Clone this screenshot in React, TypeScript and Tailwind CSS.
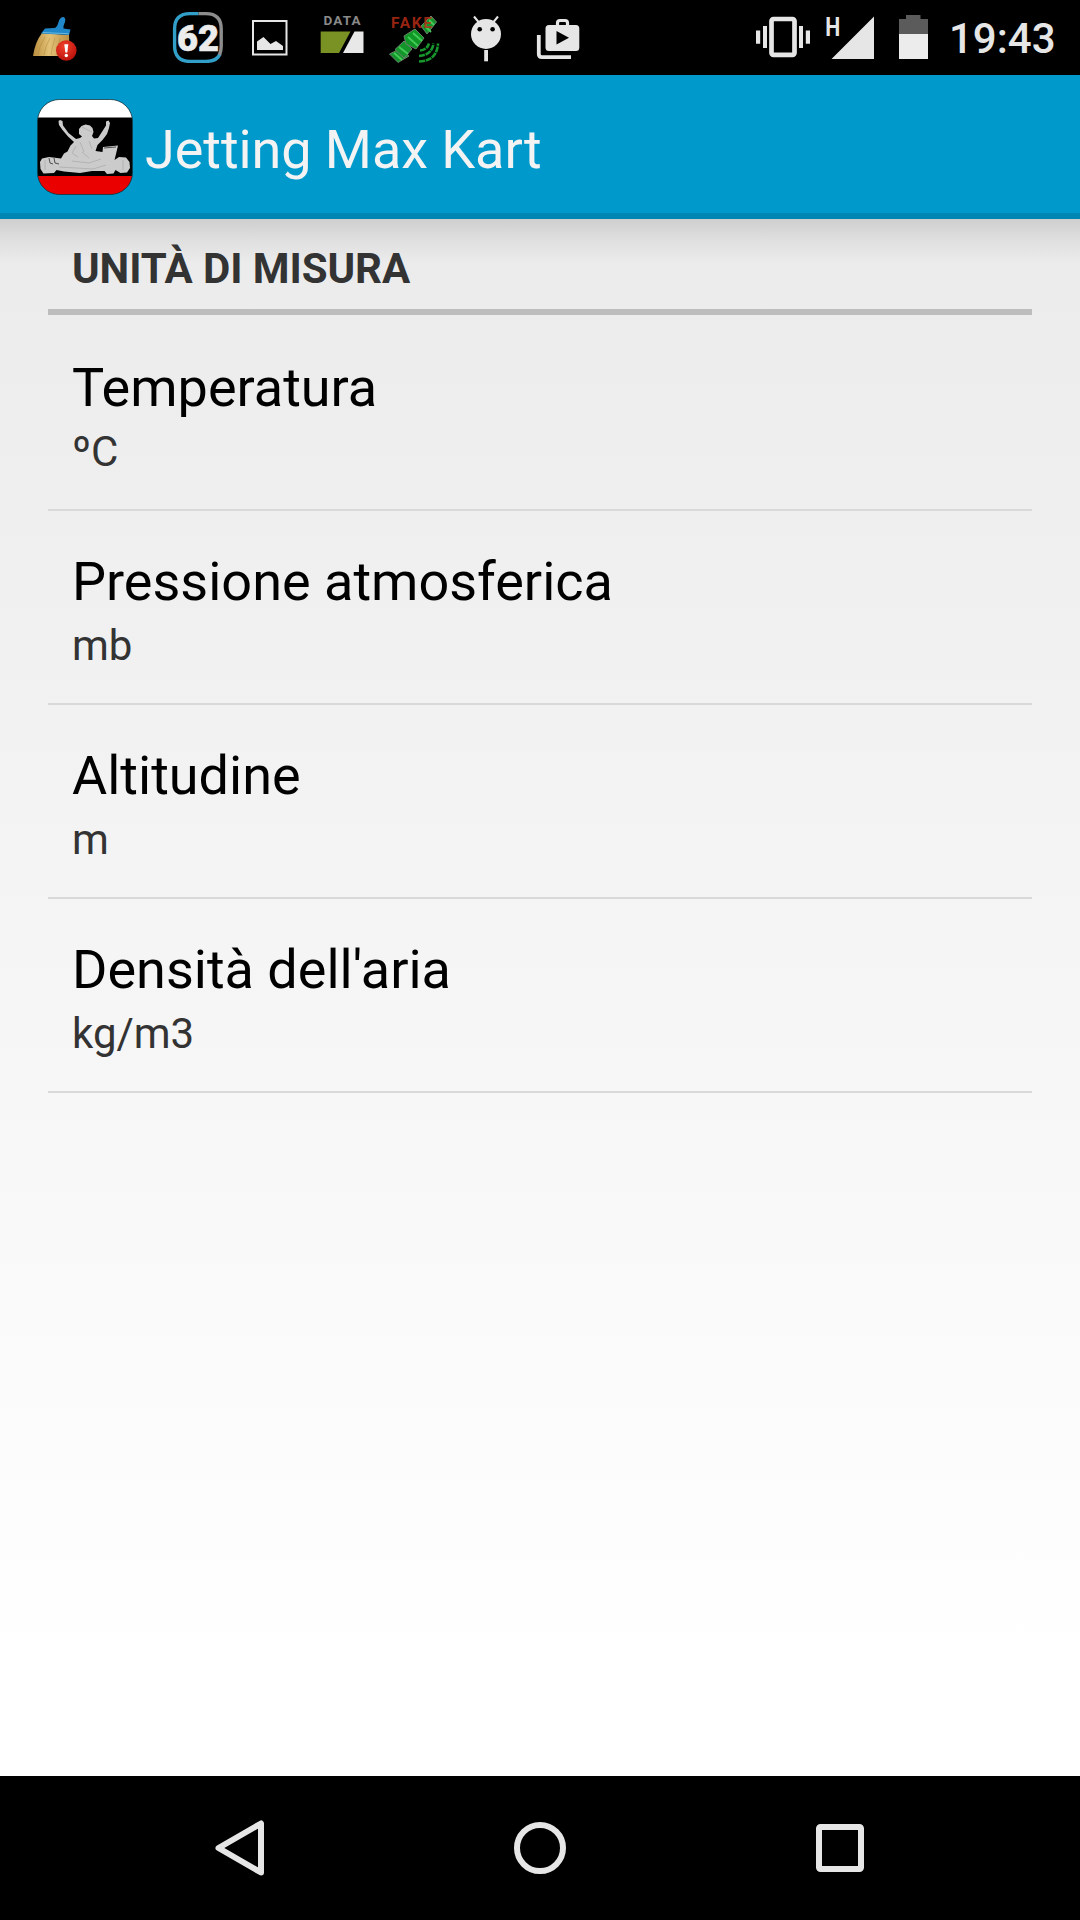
import React from "react";

const units = [
  { title: "Temperatura", value: "ºC" },
  { title: "Pressione atmosferica", value: "mb" },
  { title: "Altitudine", value: "m" },
  { title: "Densità dell'aria", value: "kg/m3" },
];

function Broom() {
  return (
    <svg className="ml-[32px] h-[48px] w-[46px] shrink-0" viewBox="32 15 46 48">
      <defs>
        <linearGradient id="straw" x1="0" x2="1" y1="0" y2="0">
          <stop offset="0" stopColor="#b98d3e" />
          <stop offset="0.45" stopColor="#e3c277" />
          <stop offset="1" stopColor="#b98f45" />
        </linearGradient>
        <radialGradient id="alert" cx="0.4" cy="0.3" r="0.75">
          <stop offset="0" stopColor="#f0402c" />
          <stop offset="1" stopColor="#b80f0a" />
        </radialGradient>
      </defs>
      <path d="M42 33 L69 35 Q70 47 66 56 L33 56 Q35 42 42 33Z" fill="url(#straw)" />
      <path d="M45 37 Q39 46 38 55 M50 38 Q45 47 44 55 M55 38 Q52 47 51 55 M60 38 L57 55" stroke="#a87c32" strokeWidth="0.6" strokeOpacity="0.7" fill="none" />
      <path d="M45 28.500 L54 28 Q57 28 58.500 22 Q60 17 63.500 17 Q66 18 65 22 Q63 26 63.500 28.500 L70.500 29.500 L69 35 L41 33.500Z" fill="#2088c8" />
      <path d="M43 32.500 L69 33.800" stroke="#67b9e2" strokeWidth="1" />
      <circle cx="66.300" cy="50.500" r="10.300" fill="url(#alert)" />
      <path d="M64.300 44.300 h4 l-1 8.300 h-2z" fill="#fff" />
      <circle cx="66.300" cy="55.500" r="1.700" fill="#fff" />
    </svg>
  );
}

function Battery62() {
  return (
    <svg className="ml-[94px] h-[52px] w-[52px] shrink-0" viewBox="172 11 52 52">
      <path d="M198.500 13.600 H190 Q174.600 13.600 174.600 29 V46 Q174.600 61.400 190 61.400 H206 Q217 61.400 220 54" fill="none" stroke="#319fc8" strokeWidth="3.400" />
      <path d="M198.500 13.600 H206 Q221.200 13.600 221.200 29 V46 Q221.200 51 219.500 55" fill="none" stroke="#8d8d8d" strokeWidth="3.400" />
      <text x="198" y="51" textAnchor="middle" fontFamily="Roboto, sans-serif" fontWeight="900" fontSize="37" textLength="42" lengthAdjust="spacingAndGlyphs" fill="#ececec" stroke="#ececec" strokeWidth="0.6">62</text>
    </svg>
  );
}

function Picture() {
  return (
    <svg className="ml-[28px] h-[36px] w-[36px] shrink-0" viewBox="0 0 36 36">
      <rect x="1" y="1" width="33.500" height="33.500" fill="none" stroke="#e6e6e6" strokeWidth="2" />
      <path d="M5 30 V21.500 L11.500 17 L18.500 24 L24 21 L31 26 V30Z" fill="#e6e6e6" />
    </svg>
  );
}

function DataMeter() {
  return (
    <svg className="ml-[32px] h-[46px] w-[46px] shrink-0" viewBox="320 8 46 46">
      <text x="323.500" y="25.200" fontFamily="Roboto, sans-serif" fontWeight="700" fontSize="13.500" textLength="37" fill="#8a8a8a">DATA</text>
      <path d="M320.700 31.500 H350.500 L339 53 H320.700Z" fill="#7a9223" />
      <path d="M354.500 31.500 H363.500 V53 H343Z" fill="#e8e8e8" />
    </svg>
  );
}

function Satellite() {
  return (
    <svg className="ml-[22px] h-[56px] w-[52px] shrink-0" viewBox="388 8 52 56">
      <g stroke="#6a806a" strokeWidth="1">
        <path d="M389.500 54 L400 49 L409 56 L398 62.500Z M421 26 L431 16 L436.500 22 L427 34Z" fill="#14952c" />
        <path d="M395 49.500 L404 41 L412 49 L404 58Z" fill="#14952c" />
        <path d="M404 36 L415 29 L424 38 L416 49 L406 44Z" fill="#109827" />
      </g>
      <path d="M394 53 L402 60 M399 47 L408 54 M408 37 L418 46 M413 33 L422 41 M424 25 L431 32 M429 20 L434 25" stroke="#43cc55" strokeWidth="1.800" />
      <g fill="none" stroke="#18962d" strokeWidth="2.600" strokeDasharray="6 0.800">
        <path d="M420 50.500 Q427 50 429 43.500" />
        <path d="M419 56 Q432 55 433.500 43.500" />
        <path d="M419 61.500 Q437 61 438 43.500" />
      </g>
      <text x="391" y="28" fontFamily="Roboto, sans-serif" fontWeight="700" fontSize="15.500" textLength="41" fill="#b52b16" fillOpacity="0.85">FAKE</text>
    </svg>
  );
}

function Droid() {
  return (
    <svg className="ml-[30px] h-[48px] w-[32px] shrink-0" viewBox="470 14 32 48">
      <circle cx="486" cy="34" r="15" fill="#e6e6e6" />
      <path d="M478.500 22 L474 16.500 M493.500 22 L498 16.500" stroke="#e6e6e6" strokeWidth="2" />
      <circle cx="479.700" cy="29.300" r="2.300" fill="#000" />
      <circle cx="492.600" cy="29.300" r="2.300" fill="#000" />
      <rect x="484.200" y="50" width="3.800" height="11.300" fill="#e6e6e6" />
    </svg>
  );
}

function PlayCase() {
  return (
    <svg className="ml-[34px] h-[42px] w-[44px] shrink-0" viewBox="536 18 44 42">
      <path d="M538.800 35 V54 Q538.800 57.200 542 57.200 H571" fill="none" stroke="#e6e6e6" strokeWidth="3.800" />
      <path d="M557.500 26 V23 Q557.500 20.500 560 20.500 H565 Q567.500 20.500 567.500 23 V26" fill="none" stroke="#e6e6e6" strokeWidth="3.200" />
      <path fillRule="evenodd" d="M549 25 H576 Q579.300 25 579.300 28.500 V47.500 Q579.300 51 576 51 H549 Q545.500 51 545.500 47.500 V28.500 Q545.500 25 549 25Z M556.500 31 V44.500 L569 37.800Z" fill="#e6e6e6" />
    </svg>
  );
}

function Vibrate() {
  return (
    <svg className="h-[44px] w-[56px] shrink-0" viewBox="755 15 56 44">
      <rect x="771.500" y="19" width="23" height="35.800" rx="2" fill="none" stroke="#e6e6e6" strokeWidth="4.700" />
      <path d="M756 30.500h4.200v13.300h-4.200z M763 26h4v22h-4z M799 26h4v22h-4z M805.800 30.500h4.200v13.300h-4.200z" fill="#e6e6e6" />
    </svg>
  );
}

function Signal() {
  return (
    <svg className="ml-[14px] h-[52px] w-[50px] shrink-0" viewBox="825 8 50 52">
      <text x="825.200" y="35.500" fontFamily="Roboto, sans-serif" fontWeight="700" fontSize="25" textLength="15" lengthAdjust="spacingAndGlyphs" fill="#e6e6e6">H</text>
      <path d="M874 16.500 V59 H831.500Z" fill="#e6e6e6" />
    </svg>
  );
}

function Battery() {
  return (
    <svg className="ml-[23px] h-[46px] w-[32px] shrink-0" viewBox="898 14 32 46">
      <path d="M906 15h14.500v4h7.500v15h-29v-15h7z" fill="#5b5b5b" />
      <rect x="899" y="34" width="29" height="25" fill="#ececec" />
    </svg>
  );
}

function KartLogo() {
  return (
    <svg className="h-[98px] w-[98px] shrink-0" viewBox="36 98 98 98">
      <defs>
        <clipPath id="tile"><rect x="37.500" y="99.500" width="95" height="95" rx="22" /></clipPath>
      </defs>
      <g clipPath="url(#tile)">
        <rect x="37" y="99" width="96" height="96" fill="#000" />
        <rect x="37" y="99" width="96" height="18.500" fill="#fff" />
        <rect x="37" y="176" width="96" height="19" fill="#eb0000" />
      </g>
      <rect x="37.500" y="99.500" width="95" height="95" rx="22" fill="none" stroke="#103c4a" strokeOpacity="0.75" strokeWidth="1" />
      <path
        fill="#cbcbcb"
        d="M58.500 121 L60 120 L62.500 121 L63 125.500 L68.500 133 L76 139 L80 138 L82 136.500 L79 134 L79 129 L81.500 126 L85.500 124.500 L90 125.500 L92.500 128 L93.500 132 L92 136 L94 138.500 L98 138 L102.500 131 L106 125.500 L106 121.500 L108.500 120.500 L110 123 L109 128 L107 134 L102.500 140 L97.500 145 L95.500 151 L102.500 152 L103 147 L118 145.500 L116 154 L114.500 160 L119 157 L126 157.500 L129.500 162 L130 168 L127 172.500 L120.500 173 L115.500 170 L113.500 173.500 L107 174 L104.500 171 L92 171 L80 173 L64 171.500 L56.500 170 L54 173 L43.500 173.500 L40.500 169 L40 162 L42 158.500 L49 157 L61 158.500 L64 153.500 L67.500 151.500 L70.500 145.500 L74 142 L68 136.500 L62.500 130 L59 125Z"
      />
      <path d="M49 158l1 5 3 1M54 158l1 5 4 1 M104 148l12-1" stroke="#303030" strokeWidth="0.800" fill="none" />
      <path d="M82 127l8 4 2 1M80 142l4 10M89 141l3 8M76 146l-4 7 6 4M72 161l17 2 12-4M82 152l7 6M45 160v10M123 160v10M59 167l34 2 13-4" stroke="#b0b0b0" strokeWidth="0.900" fill="none" />
    </svg>
  );
}

export default function App() {
  return (
    <div className="flex h-[1920px] w-[1080px] flex-col overflow-hidden bg-white font-['Roboto',sans-serif]">
      <div className="flex h-[75px] shrink-0 justify-between bg-black">
        <div className="flex items-start">
          <div className="flex pt-[15px]"><Broom /></div>
          <div className="flex pt-[11px]"><Battery62 /></div>
          <div className="flex pt-[20px]"><Picture /></div>
          <div className="flex pt-[8px]"><DataMeter /></div>
          <div className="flex pt-[8px]"><Satellite /></div>
          <div className="flex pt-[14px]"><Droid /></div>
          <div className="flex pt-[18px]"><PlayCase /></div>
        </div>
        <div className="flex items-start pr-[24px]">
          <div className="flex pt-[15px]"><Vibrate /></div>
          <div className="flex pt-[8px]"><Signal /></div>
          <div className="flex pt-[14px]"><Battery /></div>
          <div className="ml-[19px] w-[107px] pt-[14px] text-[42px] leading-[50px] font-medium whitespace-nowrap text-[#e6e6e6]">19:43</div>
        </div>
      </div>

      <header className="flex h-[144px] shrink-0 items-start border-b-[6px] border-[#0086b3] bg-[#0099cc] pt-[23px] pl-[36px]">
        <KartLogo />
        <h1 className="ml-[11px] pt-[20px] text-[54px] leading-[64px] tracking-[-0.07px] text-[#f3f3f3]">Jetting Max Kart</h1>
      </header>

      <main className="flex min-h-0 grow flex-col bg-linear-to-b from-[#ebebeb] to-white to-[94%]">
        <div className="-mb-[44px] h-[44px] shrink-0 bg-linear-to-b from-black/12 via-black/5 to-transparent" />
        <div className="flex grow flex-col px-[48px]">
          <h2 className="h-[96px] shrink-0 border-b-[6px] border-[#bdbdbd] pt-[25px] pl-[24px] text-[42px] leading-[50px] font-bold tracking-[-0.08px] text-[#333333]">
            UNITÀ DI MISURA
          </h2>
          <ul className="pt-[2px]">
            {units.map((unit) => (
              <li key={unit.title} className="h-[194px] border-b-2 border-[#d9d9d9] pt-[39px] pl-[24px]">
                <div className="text-[54px] leading-[64px] text-black">{unit.title}</div>
                <div className="mt-[7px] text-[42px] leading-[50px] text-[#333333]">{unit.value}</div>
              </li>
            ))}
          </ul>
        </div>
      </main>

      <nav className="flex h-[144px] shrink-0 items-center justify-center gap-[240px] bg-black">
        <svg className="h-[60px] w-[60px]" viewBox="0 0 60 60">
          <path d="M8.500 30 L51 5.500 V54.500Z" fill="none" stroke="#e6e6e6" strokeWidth="6" strokeLinejoin="round" />
        </svg>
        <svg className="h-[60px] w-[60px]" viewBox="0 0 60 60">
          <circle cx="30" cy="30" r="23" fill="none" stroke="#e6e6e6" strokeWidth="6" />
        </svg>
        <svg className="h-[60px] w-[60px]" viewBox="0 0 60 60">
          <rect x="9" y="9" width="42" height="42" rx="1.500" fill="none" stroke="#e6e6e6" strokeWidth="6" />
        </svg>
      </nav>
    </div>
  );
}
